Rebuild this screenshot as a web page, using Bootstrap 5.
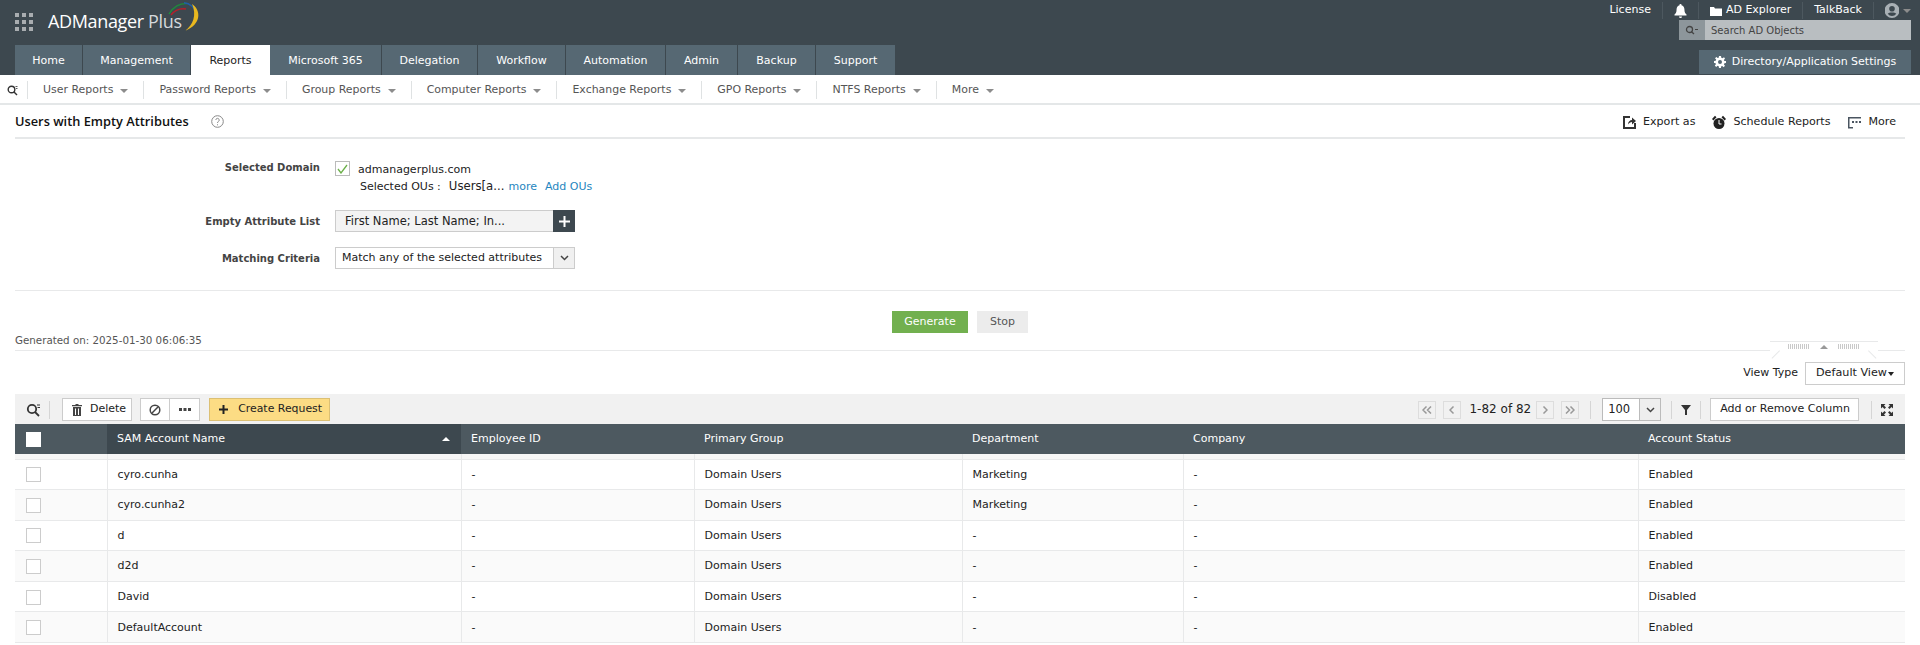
<!DOCTYPE html>
<html lang="en"><head><meta charset="utf-8"><title>ADManager Plus</title>
<link href="https://cdn.jsdelivr.net/npm/bootstrap@5.3.0/dist/css/bootstrap.min.css" rel="stylesheet">
<style>
html,body{height:645px;overflow:hidden}
body{font-family:"DejaVu Sans",sans-serif;font-size:11px;color:#222;background:#fff;line-height:1.3}
a{text-decoration:none}
.top-hdr{height:75px;background:#3d484f;color:#fff}
.hdr-left{padding-left:15px;width:1000px}
.logo-row{height:45px}
.grid-ic{width:18px;height:18px;display:grid;grid-template-columns:repeat(3,4px);grid-auto-rows:4px;gap:3px;margin-top:-1px}
.grid-ic i{background:#a9adb0;display:block}
.logo-name{font-family:"Open Sans",sans-serif;font-size:18px;margin-left:15px;color:#fff;letter-spacing:-.35px;font-weight:500;margin-top:-1px}
.logo-name span{color:#d5d9dc;font-weight:400}
.logo-arc{margin:-11px 0 0 -14px}
.tabs-row{height:30px}
.m-tab{height:30px;background:#566873;color:#fff;display:flex;align-items:center;justify-content:center;border-right:1px solid #3d484f;padding-top:2px}
.m-tab.sel{background:#fff;color:#222;border-right:0}
.w1{width:68px}.w2{width:108px}.w3{width:79px}.w4{width:112px}.w5{width:96px}.w6{width:88px}.w7{width:100px}.w8{width:72px}.w9{width:78px}.w10{width:80px}
.hdr-right{width:220px;padding-right:9px;margin-left:auto}
.lnk-row{height:18px;white-space:nowrap;padding-top:2px}
.lnk-row>div{padding:0 11px;border-right:1px solid #4d585f;height:17px;display:flex;align-items:center;gap:4px}
.lnk-row>div:last-child{border-right:0;padding-right:0}
.srch{height:20px;margin-top:2px;background:#b9bec1;color:#444;font-size:10px;width:232px;margin-left:-50px}
.srch-l{width:26px;height:20px;background:#8d969b;display:flex;align-items:center;justify-content:center}
.srch-t{padding-left:6px}
.set-btn{height:24px;width:212px;background:#566873;color:#fff;margin-top:10px;display:flex;align-items:center;justify-content:center;gap:6px;margin-left:-30px}
.sub-nav{height:30px;border-bottom:2px solid #e4e7e8;padding-left:7px;color:#555;padding-top:2px}
.sub-it{height:18px;padding:0 15px;border-right:1px solid #dfe2e3;display:flex;align-items:center;gap:7px;white-space:nowrap;font-size:10.95px}
.sub-it:last-child{border-right:0}
.car{display:inline-block;border:4px solid transparent;border-top-color:#8c8c8c;border-bottom:0;margin-top:1px}
.search-ic{padding-right:0;margin-right:0;width:21px;height:18px;border-right:1px solid #dfe2e3}
.title-row{height:34px;margin:0 15px 0 15px;border-bottom:2px solid #e6e8e9}
.ttl{font-family:"Open Sans",sans-serif;font-weight:600;font-size:12.8px;color:#111}
.help-ic{margin-left:22px}
.act{display:flex;align-items:center;gap:7px;color:#222;font-size:11.1px;padding-top:2px}
.acts{gap:18px;padding-right:9px}
.act-f{margin-right:-1px}
.form-zone{margin:0 15px;height:152px;border-bottom:1px solid #e8e9ea;position:relative;padding-top:22px}
.frm-row{display:flex}
.frm-lab{width:305px;text-align:right;font-weight:700;color:#444;font-size:10px;flex:none}
.frm-val{margin-left:15px}
.chk{width:15px;height:15px;border:1px solid #bbb;display:inline-flex;align-items:center;justify-content:center}
.dom-t{position:relative;top:2px}
.ou-line{margin:3px 0 0 25px;white-space:nowrap}
.ou-v{margin-left:8px;font-size:11.7px}
.lk{color:#1f86c0}
.lk-a{margin-left:4px}.lk-b{margin-left:8px}
.fake-in{width:218px;height:22px;background:#f3f3f3;border:1px solid #ccc;border-right:0;padding-left:9px;display:flex;align-items:center;font-size:11.5px}
.plus-b{width:22px;height:22px;background:#3d484f;display:flex;align-items:center;justify-content:center}
.fake-sel{width:240px;height:22px;border:1px solid #ccc;display:flex;align-items:center;justify-content:space-between;padding-left:6px}
.fake-arr{width:21px;height:20px;background:#f0f0f0;border-left:1px solid #ccc;display:flex;align-items:center;justify-content:center}
.r2{margin-top:16px}.r3{margin-top:15px}
.btn-zone{height:60px;margin:0 15px;border-bottom:1px solid #e8e9ea;position:relative;padding-top:20px;gap:9px}
.gen-b{width:76px;height:22px;background:#72b04f;color:#fff;display:flex;align-items:center;justify-content:center}
.stop-b{width:51px;height:22px;background:#ececec;color:#555;display:flex;align-items:center;justify-content:center}
.gen-on{position:absolute;left:0;top:43px;color:#555;font-size:10.3px}
.collapse-tab{position:absolute;right:27px;bottom:-1px;width:108px;height:10px;border-top:1px solid #e8e9ea;display:flex;align-items:center;justify-content:center;gap:10px;background:#fff}
.collapse-tab::before,.collapse-tab::after{content:"";position:absolute;bottom:0;width:11px;height:1px;background:#e8e9ea}
.collapse-tab::before{left:-1px;transform:rotate(-45deg);transform-origin:right bottom}
.collapse-tab::after{right:-1px;transform:rotate(45deg);transform-origin:left bottom}
.dots{width:22px;height:5px;background:repeating-linear-gradient(90deg,#c9c9c9 0 1px,transparent 1px 2px)}
.tri-up{border:4px solid transparent;border-bottom:4px solid #999;border-top:0}
.view-row{height:43px;padding:11px 15px 0 0;gap:7px}
.view-b{width:100px;height:23px;border:1px solid #ccc;display:flex;align-items:center;justify-content:center;font-size:11.2px}
.car-b{display:inline-block;border:3px solid transparent;border-top:4px solid #222;border-bottom:0;margin-left:1px}
.tool-bar{height:30px;margin:0 15px;background:#f1f1f1;padding:1px 12px 0 11px}
.t-btn{height:23px;background:#fff;border:1px solid #ccc;display:flex;align-items:center;gap:6px;padding:0 5px 0 9px}
.t-del{margin-left:4px;gap:8px}
.t-ic{height:23px;width:30px;background:#fff;border:1px solid #ccc;display:flex;align-items:center;justify-content:center}
.cr-btn{height:23px;background:#fcdc84;border:1px solid #dcc074;display:flex;align-items:center;gap:10px;padding:0 7px 0 9px;margin-left:9px;font-size:10.9px}
.vsep{width:1px;height:18px;background:#d5d5d5}
.pg{width:18px;height:18px;background:#f1f1f1;border:1px solid #ddd;display:flex;align-items:center;justify-content:center}
.pg-g1{margin-left:7px}
.pg-txt{margin:0 5px 0 8px;font-size:12px;white-space:nowrap}
.gap-p{margin:0 11px}
.gap-q{margin:0 9px 0 10px}
.gap-r{margin:0 9px}
.gap-s{margin:0 9px 0 12px}
.size-s{width:59px;height:23px;background:#fff;border:1px solid #bbb;display:flex;align-items:center;justify-content:space-between;padding-left:5px;font-size:11.5px}
.size-a{width:21px;height:21px;background:#eee;border-left:1px solid #bbb;display:flex;align-items:center;justify-content:center}
.adm-tbl{margin:0 15px}
.rep-tbl{width:1890px;table-layout:fixed;border-collapse:collapse;margin:0}
.rep-tbl th{background:#4d5960;color:#fff;font-weight:400;height:30px;padding:1px 0 0 10px;border:0;vertical-align:middle}
.rep-tbl th.srt{background:#3d484f;position:relative}
.rep-tbl th.srt::after{content:"";position:absolute;right:11px;top:13px;border:4px solid transparent;border-bottom:4px solid #fff;border-top:0}
.rep-tbl td{height:30.6px;padding:1px 0 0 10px;border-bottom:1px solid #e8e9ea;border-right:1px solid #e8e9ea;color:#222;vertical-align:middle;background:#fff}
.rep-tbl td:last-child{border-right:0}
.rep-tbl td:first-child{padding-left:11px}
.rep-tbl tbody tr:nth-child(even) td{background:#fafafa}
.rep-tbl .spacer td{height:5px;background:#f6f6f6;padding:0}
.c1{width:92px}.c2{width:354px}.c3{width:233px}.c4{width:268px}.c5{width:221px}.c6{width:455px}.c7{width:267px}
.box-w{width:15px;height:15px;background:#fff;border:1px solid #ccc;display:block}
.box-h{background:#fff;border-color:#fff;margin-left:1px}
</style></head>
<body>
<header class="top-hdr d-flex">
 <div class="hdr-left">
  <div class="logo-row d-flex align-items-center">
   <div class="grid-ic"><i></i><i></i><i></i><i></i><i></i><i></i><i></i><i></i><i></i></div>
   <div class="logo-name">ADManager <span>Plus</span></div>
   <svg class="logo-arc" width="34" height="30" viewBox="0 0 34 30" fill="none"><path d="M1 12C5 5 12 1 19 1.500" stroke="#1f8a3c" stroke-width="1.500"/><path d="M3 13C7 8 12 6 18 7" stroke="#b5202b" stroke-width="1.500"/><path d="M16 .8C22 1 27 6 29 12" stroke="#1f5fa8" stroke-width="1.500"/><path d="M24 2C33 8 34 22 17 29C25 23 29 13 24 2z" fill="#e9b81f"/></svg>
  </div>
  <div class="tabs-row d-flex">
   <div class="m-tab w1">Home</div><div class="m-tab w2">Management</div><div class="m-tab w3 sel">Reports</div><div class="m-tab w4">Microsoft 365</div><div class="m-tab w5">Delegation</div><div class="m-tab w6">Workflow</div><div class="m-tab w7">Automation</div><div class="m-tab w8">Admin</div><div class="m-tab w9">Backup</div><div class="m-tab w10">Support</div>
  </div>
 </div>
 <div class="hdr-right d-flex flex-column align-items-end">
  <div class="lnk-row d-flex">
   <div>License</div>
   <div><svg width="13" height="14" viewBox="0 0 13 14" fill="#fff"><path d="M6.500 0a1 1 0 0 1 1 1.200C10 2 10.500 4 10.500 6.500c0 2 1 3 2 4v1H.5v-1c1-1 2-2 2-4C2.500 4 3 2 5.500 1.200A1 1 0 0 1 6.500 0zM5 12.500h3A1.500 1.500 0 0 1 5 12.500z"/></svg></div>
   <div><svg width="12" height="10" viewBox="0 0 12 10" fill="#fff"><path d="M0 1h4l1 1.500h7V10H0z"/></svg>AD Explorer</div>
   <div>TalkBack</div>
   <div><svg width="14" height="15" viewBox="0 0 14 15" fill="#a9b0b5"><path d="M7 0a7 7 0 1 0 0 15A7 7 0 0 0 7 0zm0 3a2.800 2.800 0 1 1 0 5.600A2.800 2.800 0 0 1 7 3zm0 10a5.500 5.500 0 0 1-4.300-2.200C3.500 9.800 5 9.500 7 9.500s3.500.3 4.300 1.300A5.500 5.500 0 0 1 7 13z"/></svg><span class="car"></span></div>
  </div>
  <div class="srch d-flex align-items-center"><div class="srch-l"><svg width="14" height="10" viewBox="0 0 14 10" fill="none" stroke="#444" stroke-width="1.300"><circle cx="4.500" cy="4.500" r="3"/><path d="M6.500 6.800 9 9"/><path d="M10 4.500h3" stroke-width="1"/></svg></div><div class="srch-t">Search AD Objects</div></div>
  <div class="set-btn"><svg width="12" height="12" viewBox="0 0 12 12" fill="#fff"><path d="M5 0h2l.3 1.700 1.200.5L10 1.200l1 1.400-1.100 1.300.5 1.200L12 5v2l-1.600.3-.5 1.200 1.100 1.300-1.400 1.400-1.300-1.100-1.300.5L7 12H5l-.3-1.700-1.200-.5-1.300 1.100-1.400-1.400 1.100-1.300-.5-1.200L0 7V5l1.700-.3.500-1.200L1 2.200 2.400 1l1.300 1.100 1-.4zM6 4a2 2 0 1 0 0 4 2 2 0 0 0 0-4z"/></svg>Directory/Application Settings</div>
 </div>
</header>
<nav class="sub-nav d-flex align-items-center">
 <div class="search-ic d-flex align-items-center"><svg width="11" height="11" viewBox="0 0 11 11" fill="none" stroke="#333" stroke-width="1.400"><circle cx="4.500" cy="4.500" r="3.300"/><path d="m7 7 3 3"/><path d="M8.500 1.500h2M9 3.500h1.500" stroke-width=".8"/></svg></div>
 <div class="sub-it">User Reports <span class="car"></span></div>
 <div class="sub-it">Password Reports <span class="car"></span></div>
 <div class="sub-it">Group Reports <span class="car"></span></div>
 <div class="sub-it">Computer Reports <span class="car"></span></div>
 <div class="sub-it">Exchange Reports <span class="car"></span></div>
 <div class="sub-it">GPO Reports <span class="car"></span></div>
 <div class="sub-it">NTFS Reports <span class="car"></span></div>
 <div class="sub-it">More <span class="car"></span></div>
</nav>
<div class="title-row d-flex align-items-center justify-content-between">
 <div class="d-flex align-items-center"><span class="ttl">Users with Empty Attributes</span><svg class="help-ic" width="13" height="13" viewBox="0 0 13 13" fill="none" stroke="#888"><circle cx="6.500" cy="6.500" r="5.800"/><path d="M4.800 5a1.700 1.700 0 1 1 2.600 1.500c-.6.400-.9.700-.9 1.500M6.500 9.300v1"/></svg></div>
 <div class="acts d-flex">
  <div class="act act-f"><svg width="13" height="13" viewBox="0 0 13 13" fill="#333"><path d="M0 0h7v2H2v9h9V7h2v6H0z"/><path d="M5 8.500c0-3 2-4.500 4-4.500V1.500L13 5 9 8.500V6C7.500 6 6 7 5 8.500z"/></svg>Export as</div>
  <div class="act"><svg width="14" height="15" viewBox="0 0 14 15" fill="#222"><circle cx="7" cy="8.500" r="5.500"/><path d="M0 4 3 .8l1.500 1.400L1.400 5.400zM14 4 11 .8 9.500 2.200l3.100 3.200z"/><path d="M7 5v4h2.500" stroke="#fff" fill="none"/></svg>Schedule Reports</div>
  <div class="act"><svg width="13" height="13" viewBox="0 0 13 13" fill="#4a5560"><path d="M0 1h13v1.500H1.500v9H0z"/><path d="M4 5h2v2H4zM7.500 5h2v2h-2zM11 5h2v2h-2z"/><path d="M0 11h5v1.500H0z"/></svg>More</div>
 </div>
</div>
<section class="form-zone">
 <div class="frm-row"><div class="frm-lab">Selected Domain</div>
  <div class="frm-val"><div class="d-flex align-items-center gap-2"><span class="chk"><svg width="11" height="10" viewBox="0 0 11 10" fill="none" stroke="#6cb04a" stroke-width="1.300"><path d="m1 5 3 4 6-8"/></svg></span><span class="dom-t">admanagerplus.com</span></div>
  <div class="ou-line">Selected OUs :<span class="ou-v">Users[a...</span><a class="lk lk-a" href="#">more</a><a class="lk lk-b" href="#">Add OUs</a></div></div></div>
 <div class="frm-row r2 align-items-center"><div class="frm-lab">Empty Attribute List</div><div class="frm-val d-flex"><div class="fake-in">First Name; Last Name; In...</div><div class="plus-b"><svg width="11" height="11" viewBox="0 0 11 11" fill="#fff"><path d="M4.500 0h2v4.500H11v2H6.500V11h-2V6.500H0v-2h4.500z"/></svg></div></div></div>
 <div class="frm-row r3 align-items-center"><div class="frm-lab">Matching Criteria</div><div class="frm-val"><div class="fake-sel"><span>Match any of the selected attributes</span><span class="fake-arr"><svg width="9" height="6" viewBox="0 0 9 6" fill="none" stroke="#444" stroke-width="1.500"><path d="m1 1 3.500 3.500L8 1"/></svg></span></div></div></div>
</section>
<section class="btn-zone d-flex justify-content-center">
 <div class="gen-b">Generate</div><div class="stop-b">Stop</div>
 <div class="gen-on">Generated on: 2025-01-30 06:06:35</div>
 <div class="collapse-tab"><span class="dots"></span><span class="tri-up"></span><span class="dots"></span></div>
</section>
<div class="view-row d-flex justify-content-end align-items-start"><span class="mt-1">View Type</span><div class="view-b">Default View<span class="car-b"></span></div></div>
<div class="tool-bar d-flex align-items-center">
 <svg width="15" height="14" viewBox="0 0 15 14" fill="none" stroke="#333" stroke-width="1.800"><circle cx="6" cy="6" r="4.200"/><path d="m9 9 4 4"/><path d="M11 2h3M11.500 4.500H14" stroke-width="1"/></svg>
 <span class="vsep ms-2 me-2"></span>
 <div class="t-btn t-del"><svg width="10" height="12" viewBox="0 0 10 12" fill="#444"><path d="M3.500 0h3v1H10v1.200H0V1h3.500zM1 3h8v9H1zm2 1.500V11h1V4.500zm3 0V11h1V4.500z"/></svg>Delete</div>
 <div class="d-flex ms-2"><div class="t-ic"><svg width="12" height="12" viewBox="0 0 12 12" fill="none" stroke="#444" stroke-width="1.500"><circle cx="6" cy="6" r="4.800"/><path d="m2.800 9.200 6.400-6.400"/></svg></div><div class="t-ic border-start-0"><svg width="12" height="3" viewBox="0 0 12 3" fill="#444"><path d="M0 0h3v3H0zM4.500 0h3v3h-3zM9 0h3v3H9z"/></svg></div></div>
 <div class="cr-btn"><svg width="9" height="9" viewBox="0 0 9 9" fill="#222"><path d="M3.500 0h2v3.500H9v2H5.500V9h-2V5.500H0v-2h3.500z"/></svg>Create Request</div>
 <div class="ms-auto d-flex align-items-center">
  <div class="pg"><svg width="10" height="8" viewBox="0 0 10 8" fill="none" stroke="#999" stroke-width="1.500"><path d="M4.500 .5 1 4l3.500 3.500M9 .5 5.500 4 9 7.500"/></svg></div>
  <div class="pg pg-g1"><svg width="6" height="8" viewBox="0 0 6 8" fill="none" stroke="#999" stroke-width="1.500"><path d="M4.500 .5 1 4l3.500 3.500"/></svg></div>
  <span class="pg-txt">1-82 of 82</span>
  <div class="pg"><svg width="6" height="8" viewBox="0 0 6 8" fill="none" stroke="#999" stroke-width="1.500"><path d="M1.500 .5 5 4 1.500 7.500"/></svg></div>
  <div class="pg pg-g1"><svg width="10" height="8" viewBox="0 0 10 8" fill="none" stroke="#999" stroke-width="1.500"><path d="M1 .5 4.500 4 1 7.500M5.500 .5 9 4 5.500 7.500"/></svg></div>
  <span class="vsep gap-p"></span>
  <div class="size-s"><span>100</span><span class="size-a"><svg width="9" height="6" viewBox="0 0 9 6" fill="none" stroke="#444" stroke-width="1.500"><path d="m1 1 3.500 3.500L8 1"/></svg></span></div>
  <span class="vsep gap-q"></span>
  <svg width="10" height="10" viewBox="0 0 10 10" fill="#333"><path d="M0 0h10L6 5v5H4V5z"/></svg>
  <span class="vsep gap-r"></span>
  <div class="t-btn pe-2">Add or Remove Column</div>
  <span class="vsep gap-s"></span>
  <svg width="12" height="12" viewBox="0 0 12 12" fill="#333"><path d="M0 0h4.500L3 1.500 5 3.500 3.500 5l-2-2L0 4.500zM12 0v4.500L10.500 3l-2 2L7 3.500l2-2L7.500 0zM0 12V7.500L1.500 9l2-2L5 8.500l-2 2L4.500 12zM12 12H7.500L9 10.500l-2-2L8.500 7l2 2L12 7.500z"/></svg>
 </div>
</div>
<div class="adm-tbl">
 <table class="rep-tbl">
  <colgroup><col class="c1"><col class="c2"><col class="c3"><col class="c4"><col class="c5"><col class="c6"><col class="c7"></colgroup>
  <thead><tr><th><span class="box-w box-h"></span></th><th class="srt">SAM Account Name</th><th>Employee ID</th><th>Primary Group</th><th>Department</th><th>Company</th><th>Account Status</th></tr></thead>
  <tbody>
   <tr class="spacer"><td></td><td></td><td></td><td></td><td></td><td></td><td></td></tr>
  </tbody>
  <tbody>
   <tr><td><span class="box-w"></span></td><td>cyro.cunha</td><td>-</td><td>Domain Users</td><td>Marketing</td><td>-</td><td>Enabled</td></tr>
   <tr><td><span class="box-w"></span></td><td>cyro.cunha2</td><td>-</td><td>Domain Users</td><td>Marketing</td><td>-</td><td>Enabled</td></tr>
   <tr><td><span class="box-w"></span></td><td>d</td><td>-</td><td>Domain Users</td><td>-</td><td>-</td><td>Enabled</td></tr>
   <tr><td><span class="box-w"></span></td><td>d2d</td><td>-</td><td>Domain Users</td><td>-</td><td>-</td><td>Enabled</td></tr>
   <tr><td><span class="box-w"></span></td><td>David</td><td>-</td><td>Domain Users</td><td>-</td><td>-</td><td>Disabled</td></tr>
   <tr><td><span class="box-w"></span></td><td>DefaultAccount</td><td>-</td><td>Domain Users</td><td>-</td><td>-</td><td>Enabled</td></tr>
  </tbody>
 </table>
</div>
<script src="https://cdn.jsdelivr.net/npm/bootstrap@5.3.0/dist/js/bootstrap.bundle.min.js"></script>
</body></html>
